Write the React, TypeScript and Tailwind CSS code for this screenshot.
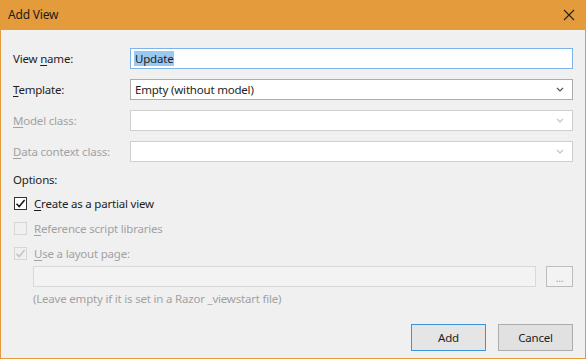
import React from "react";

const Chevron = ({ color }: { color: string }) => (
  <svg width="8" height="5" viewBox="0 0 8 5" fill="none">
    <path d="M1 1 L4 4 L7 1" stroke={color} strokeWidth="1.2" />
  </svg>
);

const Row = ({
  label,
  u,
  rest,
  disabled,
  children,
}: {
  label?: string;
  u: string;
  rest: string;
  disabled?: boolean;
  children: React.ReactNode;
}) => (
  <div className="flex items-center h-[21px]">
    <div className={`w-[117px] ${disabled ? "text-[#a2a2a2]" : "text-[#1e1e1e]"}`}>
      {label}
      <span className="underline underline-offset-2">{u}</span>
      {rest}
    </div>
    {children}
  </div>
);

const Select = ({ value, disabled }: { value?: string; disabled?: boolean }) => (
  <div
    className={`flex-1 h-[21px] bg-white border flex items-center justify-between pl-[4px] pr-[8px] ${
      disabled ? "border-[#cfcfcf]" : "border-[#adadad]"
    }`}
  >
    <span className="text-[#1e1e1e]">{value}</span>
    <Chevron color={disabled ? "#c2c2c2" : "#555"} />
  </div>
);

const Check = ({
  checked,
  disabled,
}: {
  checked?: boolean;
  disabled?: boolean;
}) => (
  <div
    className={`w-[13px] h-[13px] border flex items-center justify-center ${
      disabled ? "border-[#d6d6d6] bg-[#f0f0f0]" : "border-[#333] bg-white"
    }`}
  >
    {checked && (
      <svg width="11" height="11" viewBox="0 0 11 11" fill="none">
        <path
          d="M1.5 5.8 L4.2 8.5 L9.6 2"
          stroke={disabled ? "#c4c4c4" : "#1a1a1a"}
          strokeWidth="1.6"
        />
      </svg>
    )}
  </div>
);

export default function App() {
  return (
    <div
      className="w-[586px] h-[359px] bg-[#e39b3b] px-px pb-px flex flex-col text-[11.5px] tracking-[-0.2px]"
      style={{ fontFamily: '"Noto Sans", "Open Sans", sans-serif' }}
    >
      <div className="h-[30px] flex items-center justify-between pl-[7px] pr-[10px] text-[#1b1b1b]">
        <span className="text-[12px]">Add View</span>
        <svg width="12" height="12" viewBox="0 0 12 12" fill="none">
          <path d="M1 1 L11 11 M11 1 L1 11" stroke="#222" strokeWidth="1.1" />
        </svg>
      </div>
      <div className="flex-1 bg-[#f0f0f0] pl-[12px] pr-[12px] pt-[18px] flex flex-col">
        <div className="flex flex-col gap-[10px]">
          <Row label="View " u="n" rest="ame:">
            <div className="flex-1 h-[21px] bg-white border border-[#7eb4ea] flex items-center pl-[3px]">
              <span className="bg-[#99c9ef] text-[#1e1e1e] px-[1px] leading-[15px]">Update</span>
            </div>
          </Row>
          <Row u="T" rest="emplate:">
            <Select value="Empty (without model)" />
          </Row>
          <Row u="M" rest="odel class:" disabled>
            <Select disabled />
          </Row>
          <Row u="D" rest="ata context class:" disabled>
            <Select disabled />
          </Row>
        </div>
        <div className="mt-[9px] text-[#1e1e1e] leading-[17px]">Options:</div>
        <div className="mt-[7px] flex flex-col gap-[8px] pl-[1px]">
          <div className="flex items-center gap-[7px] h-[17px]">
            <Check checked />
            <span className="text-[#1e1e1e]">
              <span className="underline underline-offset-2">C</span>reate as a partial view
            </span>
          </div>
          <div className="flex items-center gap-[7px] h-[17px]">
            <Check disabled />
            <span className="text-[#a2a2a2]">
              <span className="underline underline-offset-2">R</span>eference script libraries
            </span>
          </div>
          <div className="flex items-center gap-[7px] h-[17px]">
            <Check checked disabled />
            <span className="text-[#a2a2a2]">
              <span className="underline underline-offset-2">U</span>se a layout page:
            </span>
          </div>
        </div>
        <div className="mt-[4px] pl-[20px] flex items-center">
          <div className="flex-1 h-[21px] border border-[#d9d9d9] bg-[#f3f3f3]" />
          <div className="ml-[10px] w-[27px] h-[21px] border border-[#bdbdbd] bg-[#f3f3f3] flex items-center justify-center text-[#a0a0a0] text-[10px] leading-none pt-[3px]">
            ...
          </div>
        </div>
        <div className="mt-[3px] pl-[20px] text-[#a2a2a2] leading-[17px]">
          (Leave empty if it is set in a Razor _viewstart file)
        </div>
        <div className="mt-[17px] flex justify-end gap-[12px]">
          <button className="w-[75px] h-[27px] border border-[#3c94d8] bg-[#e5e5e5] text-[#1e1e1e]">
            Add
          </button>
          <button className="w-[75px] h-[27px] border border-[#adadad] bg-[#e1e1e1] text-[#1e1e1e]">
            Cancel
          </button>
        </div>
      </div>
    </div>
  );
}
